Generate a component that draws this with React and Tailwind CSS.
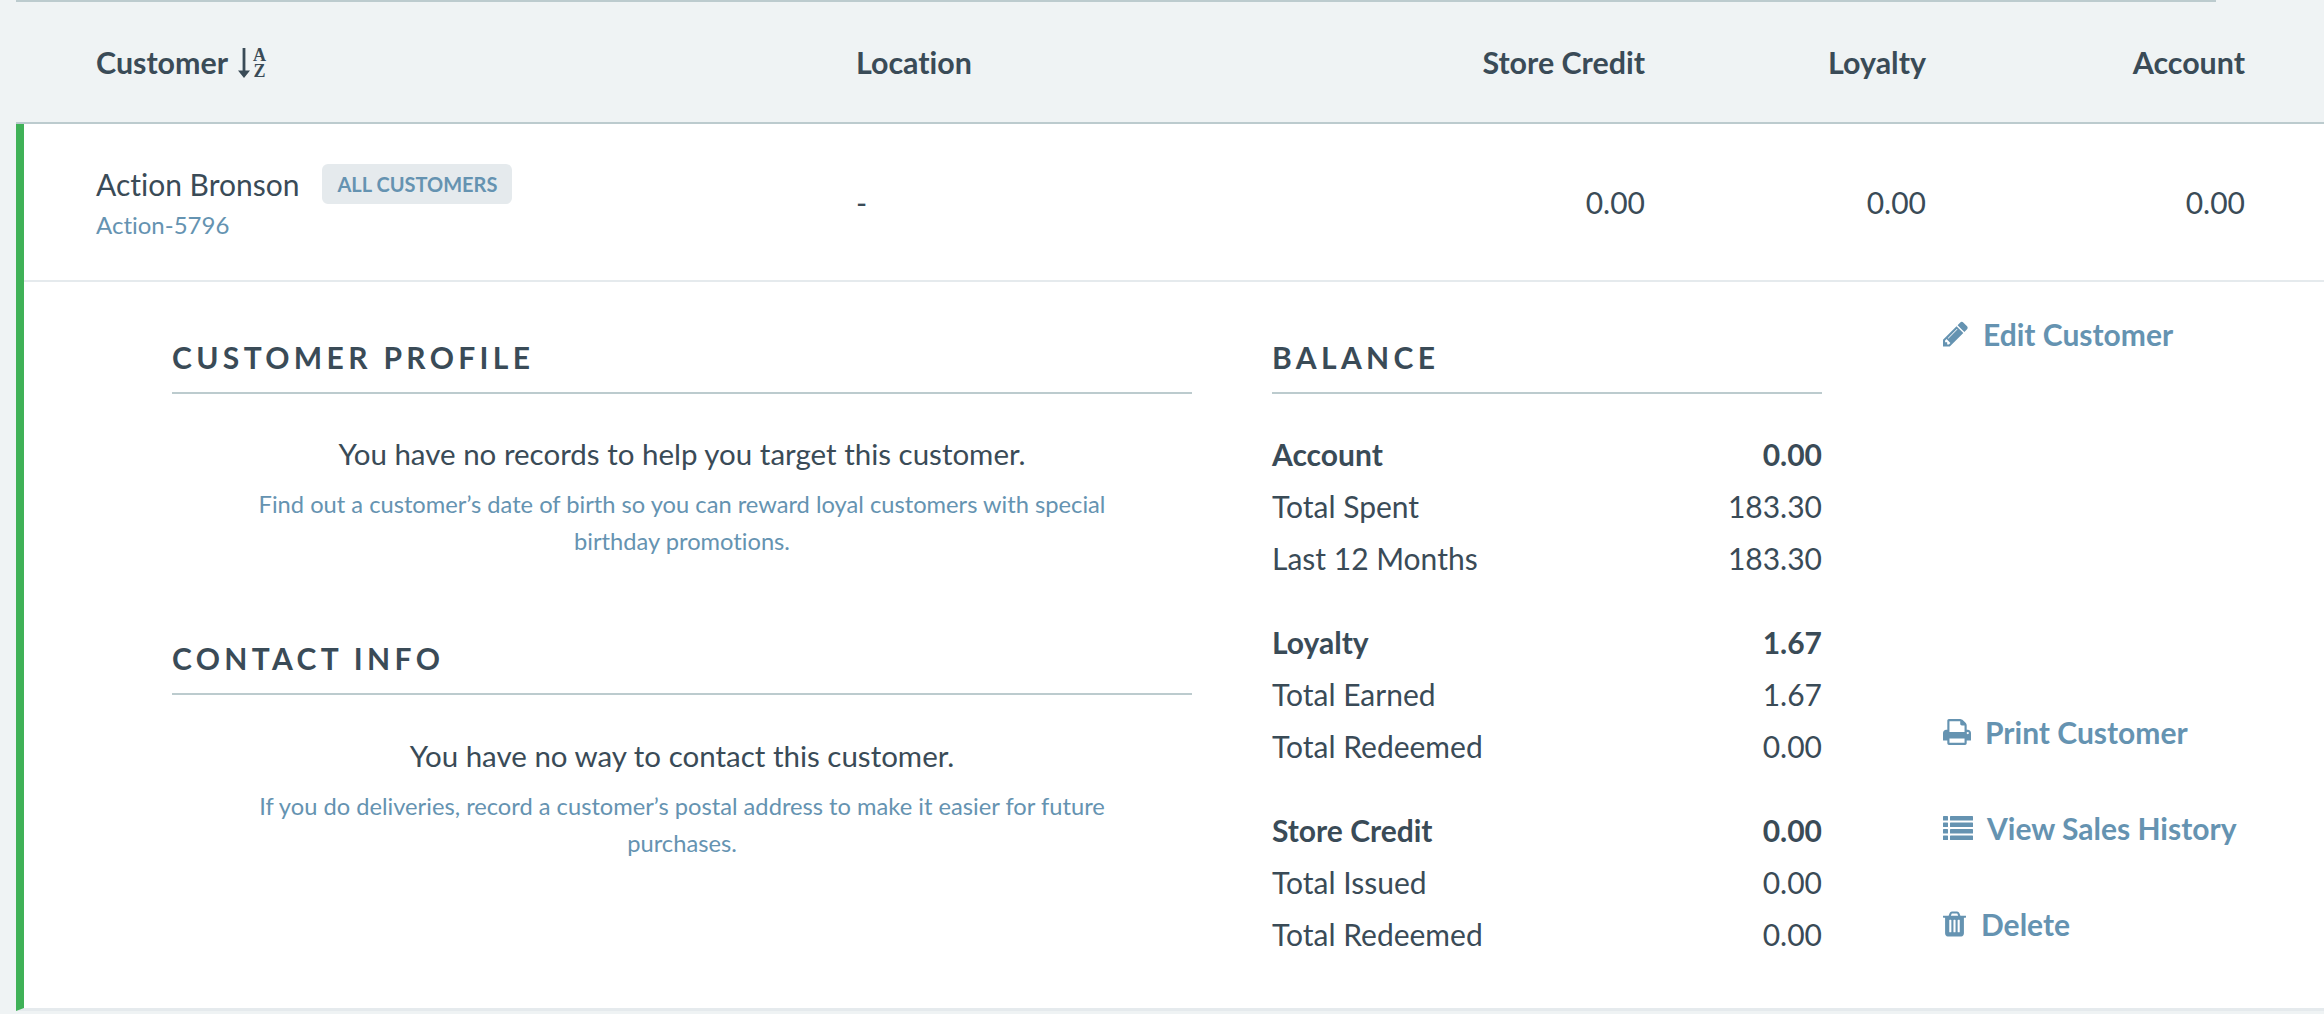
const COLS = 'grid grid-cols-[760px_400px_389px_281px_319px] items-center pl-20';

const BALANCE = [
  { title: 'Account', total: '0.00', rows: [['Total Spent', '183.30'], ['Last 12 Months', '183.30']] },
  { title: 'Loyalty', total: '1.67', rows: [['Total Earned', '1.67'], ['Total Redeemed', '0.00']] },
  { title: 'Store Credit', total: '0.00', rows: [['Total Issued', '0.00'], ['Total Redeemed', '0.00']] },
];

const SortIcon = () => (
  <span className="flex items-center gap-[3px] ml-[10px]">
    <svg viewBox="0 0 12 30" className="w-3 h-[30px] fill-current">
      <path d="M4.6 0h2.8v22.5H12L6 30 0 22.5h4.6z" />
    </svg>
    <span className="flex flex-col items-center text-[18px] leading-[16px] font-bold font-['Liberation_Serif',serif]">
      <span>A</span>
      <span>Z</span>
    </span>
  </span>
);

const PencilIcon = () => (
  <svg viewBox="128 128 1536 1536" className="w-[25px] h-[26px] fill-current shrink-0">
    <path d="M491 1536l91-91-235-235-91 91v107h128v128h107zm523-928q0-22-22-22-10 0-17 7l-542 542q-7 7-7 17 0 22 22 22 10 0 17-7l542-542q7-7 7-17zm-54-192l416 416-832 832h-416v-416zm683 96q0 53-37 90l-166 166-416-416 166-165q36-38 90-38 53 0 91 38l235 234q37 39 37 91z" />
  </svg>
);

const PrintIcon = () => (
  <svg viewBox="64 128 1664 1536" className="w-[28px] h-[26px] fill-current shrink-0">
    <path d="M448 1536h896v-256h-896v256zm0-640h896v-384h-160q-40 0-68-28t-28-68v-160h-640v640zm1152 64q0-26-19-45t-45-19-45 19-19 45 19 45 45 19 45-19 19-45zm128 0v416q0 13-9.5 22.5t-22.5 9.5h-224v160q0 40-28 68t-68 28h-960q-40 0-68-28t-28-68v-160h-224q-13 0-22.5-9.5t-9.5-22.5v-416q0-79 56.5-135.5t135.5-56.5h64v-544q0-40 28-68t68-28h672q40 0 88 20t76 48l152 152q28 28 48 76t20 88v256h64q79 0 135.5 56.5t56.5 135.5z" />
  </svg>
);

const ListIcon = () => (
  <svg viewBox="0 0 30 24" className="w-[30px] h-6 fill-current shrink-0">
    <rect x="0" y="0" width="5" height="4.5" rx="0.6" /><rect x="7" y="0" width="23" height="4.5" rx="0.6" />
    <rect x="0" y="6.5" width="5" height="4.5" rx="0.6" /><rect x="7" y="6.5" width="23" height="4.5" rx="0.6" />
    <rect x="0" y="13" width="5" height="4.5" rx="0.6" /><rect x="7" y="13" width="23" height="4.5" rx="0.6" />
    <rect x="0" y="19.5" width="5" height="4.5" rx="0.6" /><rect x="7" y="19.5" width="23" height="4.5" rx="0.6" />
  </svg>
);

const TrashIcon = () => (
  <svg viewBox="192 128 1408 1536" className="w-[23px] h-[26px] fill-current shrink-0">
    <path d="M704 1376v-704q0-14-9-23t-23-9h-64q-14 0-23 9t-9 23v704q0 14 9 23t23 9h64q14 0 23-9t9-23zm256 0v-704q0-14-9-23t-23-9h-64q-14 0-23 9t-9 23v704q0 14 9 23t23 9h64q14 0 23-9t9-23zm256 0v-704q0-14-9-23t-23-9h-64q-14 0-23 9t-9 23v704q0 14 9 23t23 9h64q14 0 23-9t9-23zm-544-992h448l-48-117q-7-9-17-11h-317q-10 2-17 11zm928 32v64q0 14-9 23t-23 9h-96v948q0 83-47 143.5t-113 60.5h-832q-66 0-113-58.5t-47-141.5v-952h-96q-14 0-23-9t-9-23v-64q0-14 9-23t23-9h309l70-167q15-37 54-63t79-26h320q40 0 79 26t54 63l70 167h309q14 0 23 9t9 23z" />
  </svg>
);

function SectionTitle({ children }) {
  return (
    <h2 className="h-[57px] pb-[15px] border-b-2 border-[#bccbce] text-[30px] leading-10 font-bold tracking-[0.145em]">
      {children}
    </h2>
  );
}

function EmptyNote({ title, children, className = 'mt-10' }) {
  return (
    <div className="text-center">
      <p className={`text-[29.5px] leading-10 ${className}`}>{title}</p>
      <p className="mt-3 mx-auto w-[880px] text-[23.7px] leading-[37px] text-[#6593b1]">{children}</p>
    </div>
  );
}

function ActionLink({ icon: Icon, gap, children, className = '' }) {
  return (
    <a className={`flex items-center h-10 text-[30px] font-bold text-[#6593b1] whitespace-nowrap ${gap} ${className}`}>
      <Icon />
      <span>{children}</span>
    </a>
  );
}

export default function App() {
  return (
    <div className="h-[1014px] overflow-hidden bg-[#eff3f4] text-[#3a4b57] font-['Lato',sans-serif] [font-variant-ligatures:none]">
      <div className="ml-4 mr-[108px] h-0.5 bg-[#bccbce]" />

      {/* Table head */}
      <div className={`ml-4 h-[122px] pt-0.5 border-b-2 border-[#bccbce] text-[30.4px] font-bold ${COLS}`}>
        <div className="flex items-center">
          Customer
          <SortIcon />
        </div>
        <div>Location</div>
        <div className="text-right">Store Credit</div>
        <div className="text-right">Loyalty</div>
        <div className="text-right">Account</div>
      </div>

      {/* Customer row */}
      <div className="ml-4 h-[887px] bg-white border-l-8 border-b-[3px] border-l-[#3fb157] border-b-[#e5eaed]">
        <div className={`h-[158px] border-b-2 border-[#e5eaed] text-[30px] !pl-[72px] ${COLS}`}>
          <div className="pb-[2px]">
            <div className="flex items-center">
              <span>Action Bronson</span>
              <span className="ml-[23px] h-10 px-[15px] flex items-center rounded-md bg-[#e5eaed] text-xl font-bold text-[#6593b1]">ALL CUSTOMERS</span>
            </div>
            <div className="mt-0.5 text-2xl text-[#6593b1]">Action-5796</div>
          </div>
          <div>-</div>
          <div className="text-right">0.00</div>
          <div className="text-right">0.00</div>
          <div className="text-right">0.00</div>
        </div>

        <div className="flex pl-[148px] pt-[55px]">
          <div className="w-[1020px]">
            <SectionTitle>CUSTOMER PROFILE</SectionTitle>
            <EmptyNote title="You have no records to help you target this customer.">
              Find out a customer’s date of birth so you can reward loyal customers with special birthday promotions.
            </EmptyNote>
            <div className="mt-[78px]">
              <SectionTitle>CONTACT INFO</SectionTitle>
              <EmptyNote className="mt-[41px]" title="You have no way to contact this customer.">
                If you do deliveries, record a customer’s postal address to make it easier for future purchases.
              </EmptyNote>
            </div>
          </div>

          <div className="ml-[80px] w-[550px]">
            <SectionTitle>BALANCE</SectionTitle>
            <div className="mt-[34px] flex flex-col gap-8 text-[30px]">
              {BALANCE.map((group) => (
                <div key={group.title}>
                  <div className="flex justify-between items-center h-[52px] font-bold">
                    <span>{group.title}</span>
                    <span>{group.total}</span>
                  </div>
                  {group.rows.map(([label, value]) => (
                    <div key={label} className="flex justify-between items-center h-[52px]">
                      <span>{label}</span>
                      <span>{value}</span>
                    </div>
                  ))}
                </div>
              ))}
            </div>
          </div>

          <div className="ml-[121px] -mt-[23px] flex flex-col">
            <ActionLink icon={PencilIcon} gap="gap-[15px]">Edit Customer</ActionLink>
            <ActionLink icon={PrintIcon} gap="gap-[14px]" className="mt-[358px]">Print Customer</ActionLink>
            <ActionLink icon={ListIcon} gap="gap-[14px]" className="mt-14">View Sales History</ActionLink>
            <ActionLink icon={TrashIcon} gap="gap-[15px]" className="mt-14">Delete</ActionLink>
          </div>
        </div>
      </div>
    </div>
  );
}
